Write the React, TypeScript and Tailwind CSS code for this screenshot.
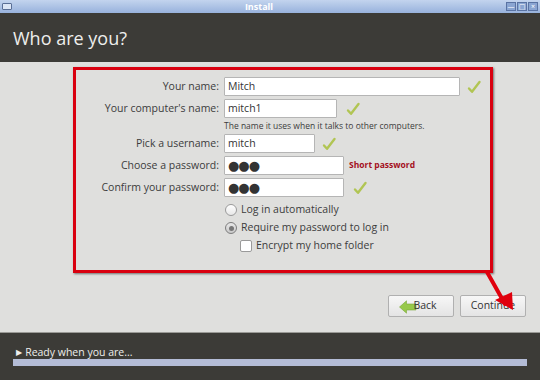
import React from "react";

const font = { fontFamily: '"Open Sans", "DejaVu Sans", sans-serif' };

function Check() {
  return (
    <svg width="16" height="16" viewBox="0 0 16 16" className="shrink-0">
      <path
        d="M3 9.5 L6 12.8 L13.5 3"
        fill="none"
        stroke="#b1c553"
        strokeWidth="2.4"
        strokeLinecap="round"
        strokeLinejoin="round"
      />
    </svg>
  );
}

function Field({ label, value, width, after, password }: { label: string; value: string; width: number; after?: React.ReactNode; password?: boolean }) {
  return (
    <>
      <div className="text-right text-[10.5px] text-[#3c3c3c] leading-[19px] h-[19px]">{label}</div>
      <div className="flex items-center gap-[6px] h-[19px]">
        <div
          className="h-[19px] bg-white border border-[#b5b5b5] rounded-[1px] px-[3px] flex items-center text-[10.5px] text-[#333]"
          style={{ width }}
        >
          {password ? <span className="text-[13px] tracking-[-1px] leading-none text-[#333]">●●●</span> : value}
        </div>
        {after}
      </div>
    </>
  );
}

export default function App() {
  return (
    <div className="w-[540px] h-[380px] flex flex-col overflow-hidden bg-[#dfdfdd]" style={font}>
      {/* title bar */}
      <div className="h-[13px] bg-gradient-to-b from-[#c3d4ee] to-[#98b2dc] flex items-center px-[2px] relative">
        <div className="w-[10px] h-[7px] border border-[#5a6f96] bg-[#dbe5f5] rounded-[1px]" />
        <div className="flex-1 text-center text-[9px] font-bold text-white leading-none">Install</div>
        <div className="flex gap-[1px]">
          {["—", "□", "×"].map((g) => (
            <div key={g} className="w-[10px] h-[9px] bg-[#8aa5d2] border border-[#5a73a3] text-[7px] text-white leading-[7px] text-center">
              {g}
            </div>
          ))}
        </div>
      </div>

      {/* header */}
      <div className="h-[49px] bg-[#3c3b37] flex items-center px-[13px] pt-[2px]">
        <h1 className="text-[18px] text-[#eeeeec]">Who are you?</h1>
      </div>

      {/* main */}
      <div className="flex-1 relative flex flex-col">
        <div className="ml-[73px] mt-[5px] w-[420px] h-[206px] border-[3px] border-[#d9000f] shadow-[1px_1px_2px_rgba(0,0,0,0.5)] pt-[7px]">
          <div className="grid grid-cols-[143px_1fr] gap-x-[5px] gap-y-[3px]">
            <Field label="Your name:" value="Mitch" width={236} after={<Check />} />
            <Field label="Your computer's name:" value="mitch1" width={113} after={<span className="ml-[2px]"><Check /></span>} />
            <div />
            <div className="text-[8.5px] text-[#3c3c3c] leading-[11px] -mt-[1px]">The name it uses when it talks to other computers.</div>
            <Field label="Pick a username:" value="mitch" width={91} after={<Check />} />
            <Field label="Choose a password:" value="" password width={120} after={<span className="text-[8.5px] font-bold text-[#a40f1c] -ml-[1px]">Short password</span>} />
            <Field label="Confirm your password:" value="" password width={120} after={<span className="ml-[2px]"><Check /></span>} />
          </div>

          <div className="ml-[149px] mt-[4px] flex flex-col text-[10.5px] text-[#3c3c3c]">
            <label className="h-[18px] flex items-center gap-[4px]">
              <span className="w-[12px] h-[12px] rounded-full border border-[#9a9a9a] bg-gradient-to-b from-white to-[#e8e8e8]" />
              Log in automatically
            </label>
            <label className="h-[18px] flex items-center gap-[4px]">
              <span className="w-[12px] h-[12px] rounded-full border border-[#7d7d7d] bg-gradient-to-b from-[#e8e8e8] to-[#c9c9c9] flex items-center justify-center">
                <span className="w-[5px] h-[5px] rounded-full bg-[#777]" />
              </span>
              Require my password to log in
            </label>
            <label className="h-[18px] flex items-center gap-[4px] ml-[15px]">
              <span className="w-[12px] h-[12px] rounded-[2px] border border-[#9a9a9a] bg-white" />
              Encrypt my home folder
            </label>
          </div>
        </div>

        <div className="mt-auto mb-[15px] mr-[14px] flex justify-end gap-[6px] text-[10.5px] text-[#333]">
          <button className="w-[66px] h-[22px] border border-[#b0b0b0] rounded-[2px] bg-gradient-to-b from-[#f7f7f7] to-[#e4e4e4] flex items-center justify-center relative">
            <svg width="18" height="14" viewBox="0 0 18 14" className="absolute left-[10px] top-[4px]">
              <path d="M0.5 7 L7.5 0.8 L7.5 4 L17 4 L17 10 L7.5 10 L7.5 13.2 Z" fill="#97c94a" stroke="#7aa83a" strokeWidth="0.6" />
            </svg>
            <span className="relative ml-[8px]">Back</span>
          </button>
          <button className="w-[66px] h-[22px] border border-[#b0b0b0] rounded-[2px] bg-gradient-to-b from-[#f7f7f7] to-[#e4e4e4]">
            Continue
          </button>
        </div>

        {/* annotation arrow */}
        <svg width="40" height="46" viewBox="0 0 40 46" className="absolute left-[483px] top-[208px]">
          <path d="M4 2 L22 34" stroke="#e0000d" strokeWidth="4" strokeLinecap="round" />
          <path d="M12 30 L30 40 L29 22 Z" fill="#e0000d" />
        </svg>
      </div>

      {/* bottom bar */}
      <div className="h-[48px] bg-[#3c3b37] border-t border-[#9a9a96] px-[13px] pt-[12px]">
        <div className="flex items-center gap-[3px] text-[10.5px] text-[#eeeeec] leading-[14px] pl-[3px]">
          <span className="text-[8px]">▶</span>
          Ready when you are...
        </div>
        <div className="h-[7px] bg-[#b4bcd6]" />
      </div>
    </div>
  );
}
